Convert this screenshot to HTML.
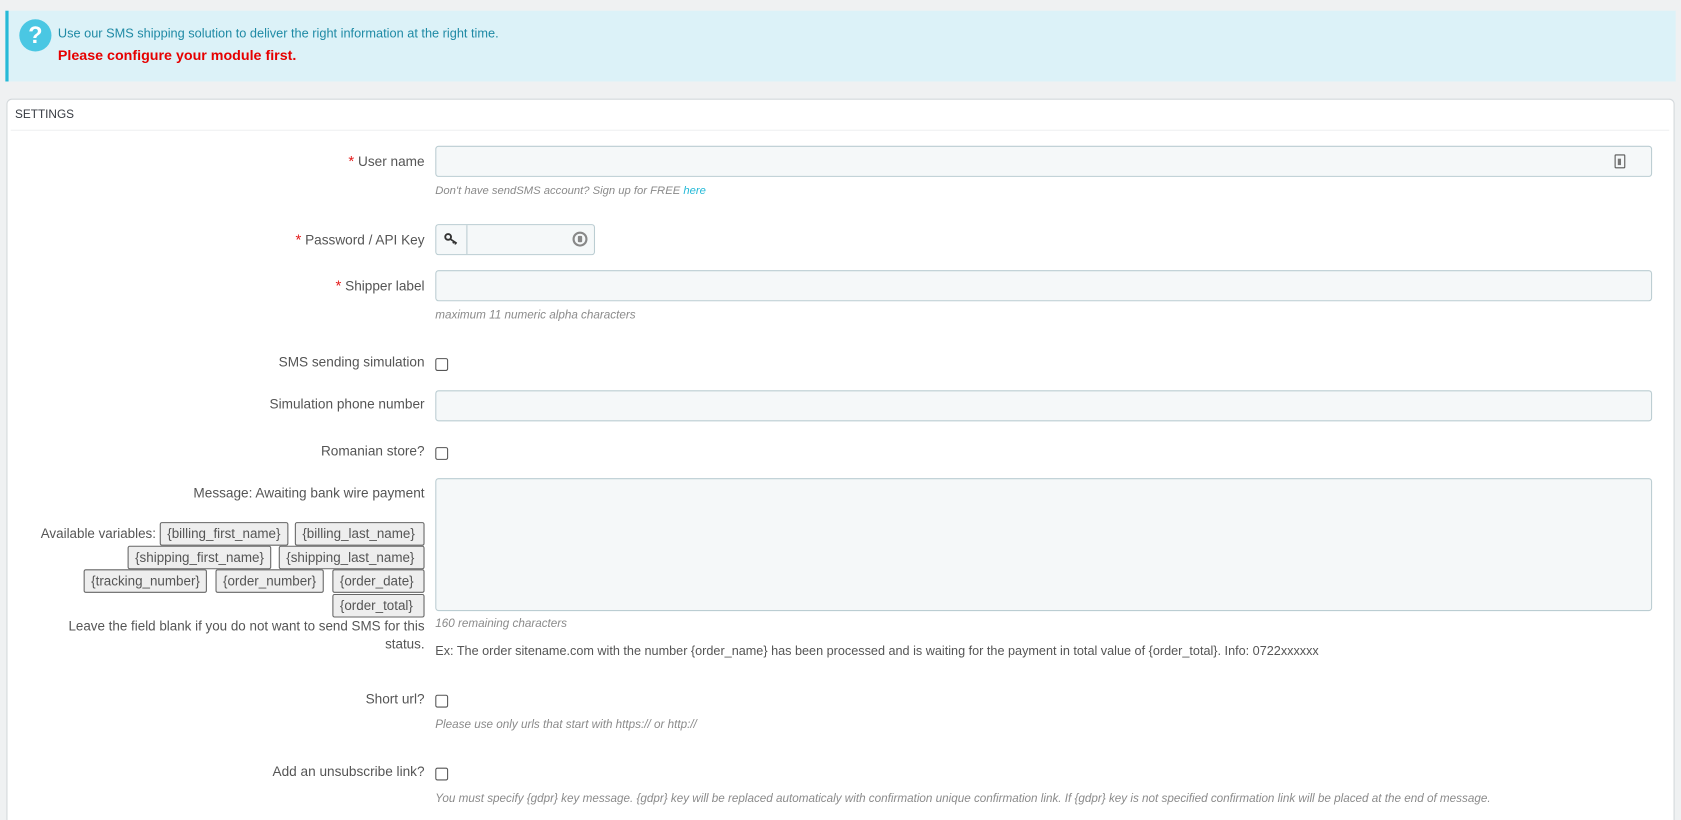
<!DOCTYPE html>
<html><head><meta charset="utf-8"><style>
*{box-sizing:border-box;margin:0;padding:0}
html,body{width:1681px;height:820px;overflow:hidden}
body{background:#eff1f2;font-family:"Liberation Sans",sans-serif;font-size:12px;color:#555;position:relative}
#w{position:absolute;left:0;top:0;width:1568px;height:765px;overflow:hidden;transform:scale(1.0721);transform-origin:0 0}
.a{position:absolute}
.alert{left:5px;top:10px;width:1558px;height:66px;background:#dcf2f8;border-left:3px solid #25b9d7}
.q{left:10px;top:8px;width:30px;height:30px;border-radius:50%;background:#4ac7e3;color:#fff;font-weight:bold;font-size:22px;text-align:center;line-height:30px}
.panel{left:6px;top:92px;width:1556px;height:700px;background:#fff;border:1px solid #d3d8db;border-radius:5px}
.lbl{right:1172px;text-align:right;font-size:12.7px;color:#555;white-space:nowrap}
.req{color:#e41d1d;font-size:14px}
.in{left:406px;width:1135px;height:29px;background:#f5f8f9;border:1px solid #bbcdd2;border-radius:3px}
.help{left:406px;font-style:italic;font-size:10.9px;color:#8a8a8a}
.cb{left:406px;width:12px;height:12px;border:1px solid #555;border-radius:2px;background:#fff}
.tag{position:absolute;height:22px;border:1px solid #666;border-radius:2px;background:#eee;color:#555;font-size:12.5px;line-height:20px;padding:0 6px;white-space:nowrap}
</style></head><body><div id="w">
<div class="a alert">
 <div class="a q">?</div>
 <div class="a" style="left:46px;top:14px;font-size:11.9px;color:#1f8aa5">Use our SMS shipping solution to deliver the right information at the right time.</div>
 <div class="a" style="left:46px;top:34px;font-size:13.3px;color:#e60000;font-weight:bold">Please configure your module first.</div>
</div>
<div class="a panel"></div>
<div class="a" style="left:14px;top:101px;font-size:11px;color:#363a41">SETTINGS</div>
<div class="a" style="left:10px;top:121px;width:1547px;height:1px;background:#eef0f1"></div>

<div class="a lbl" style="top:142px"><span class="req">*</span> User name</div>
<div class="a in" style="top:136px"><div class="a" style="right:24px;top:7px;width:10px;height:13px;border:1.5px solid #555;border-radius:1px"><div class="a" style="left:2px;top:3px;width:3px;height:6px;background:#777"></div></div></div>
<div class="a help" style="top:172px;font-size:10.5px">Don't have sendSMS account? Sign up for FREE <span style="color:#25b9d7">here</span></div>

<div class="a lbl" style="top:215px"><span class="req">*</span> Password / API Key</div>
<div class="a in" style="top:209px;width:149px"><div class="a" style="left:28px;top:0;width:1px;height:27px;background:#bbcdd2"></div>
<svg class="a" style="left:7px;top:7px" width="14" height="12" viewBox="0 0 14 12"><circle cx="4" cy="4" r="2.7" fill="none" stroke="#333" stroke-width="1.8"/><path d="M6 6 L12 10 M9.5 8.3 L8.5 10 M11 9.3 L10.5 11" stroke="#333" stroke-width="1.6" fill="none"/></svg>
<div class="a" style="right:6px;top:6px;width:14px;height:14px;border:2px solid #888;border-radius:50%"><div class="a" style="left:3px;top:2px;width:4px;height:6px;background:#888;border-radius:1px"></div></div></div>

<div class="a lbl" style="top:258px"><span class="req">*</span> Shipper label</div>
<div class="a in" style="top:252px"></div>
<div class="a help" style="top:288px">maximum 11 numeric alpha characters</div>

<div class="a lbl" style="top:331px">SMS sending simulation</div>
<div class="a cb" style="top:334px"></div>
<div class="a lbl" style="top:370px">Simulation phone number</div>
<div class="a in" style="top:364px"></div>
<div class="a lbl" style="top:414px">Romanian store?</div>
<div class="a cb" style="top:417px"></div>

<div class="a lbl" style="top:453px">Message: Awaiting bank wire payment</div>
<div class="a in" style="top:446px;height:124px"></div>
<div class="a" style="left:38px;top:491px;font-size:12.5px">Available variables:</div>
<div class="tag" style="left:149px;top:487px">{billing_first_name}</div>
<div class="tag" style="left:275px;top:487px;width:121px">{billing_last_name}</div>
<div class="tag" style="left:119px;top:509px">{shipping_first_name}</div>
<div class="tag" style="left:260px;top:509px;width:136px">{shipping_last_name}</div>
<div class="tag" style="left:78px;top:531px">{tracking_number}</div>
<div class="tag" style="left:201px;top:531px">{order_number}</div>
<div class="tag" style="left:310px;top:531px;width:86px">{order_date}</div>
<div class="tag" style="left:310px;top:554px;width:86px">{order_total}</div>
<div class="a" style="right:1172px;top:576px;text-align:right;font-size:12.5px;line-height:17px;width:350px">Leave the field blank if you do not want to send SMS for this status.</div>
<div class="a help" style="top:576px">160 remaining characters</div>
<div class="a" style="left:406px;top:600px;font-size:11.8px;color:#555">Ex: The order sitename.com with the number {order_name} has been processed and is waiting for the payment in total value of {order_total}. Info: 0722xxxxxx</div>

<div class="a lbl" style="top:645px">Short url?</div>
<div class="a cb" style="top:648px"></div>
<div class="a help" style="top:670px">Please use only urls that start with https:// or http://</div>
<div class="a lbl" style="top:713px">Add an unsubscribe link?</div>
<div class="a cb" style="top:716px"></div>
<div class="a help" style="top:739px">You must specify {gdpr} key message. {gdpr} key will be replaced automaticaly with confirmation unique confirmation link. If {gdpr} key is not specified confirmation link will be placed at the end of message.</div>
</div></body></html>
